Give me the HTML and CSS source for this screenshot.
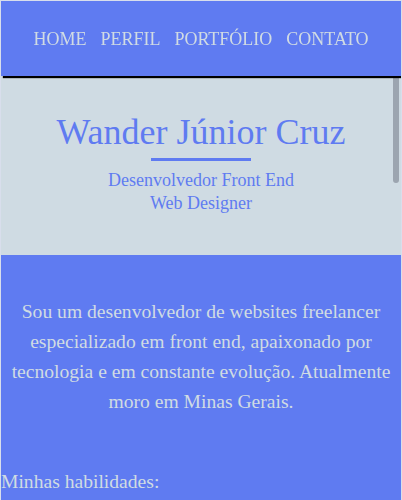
FILE: index.html
```html
<!DOCTYPE html>
<html lang="pt-BR">
<head>
<meta charset="utf-8">
<title>Wander Júnior Cruz</title>
<link rel="stylesheet" href="styles.css">
</head>
<body>
<header class="topbar">
  <nav class="menu">
    <a href="#" class="menu-link">HOME</a>
    <a href="#" class="menu-link">PERFIL</a>
    <a href="#" class="menu-link">PORTFÓLIO</a>
    <a href="#" class="menu-link">CONTATO</a>
  </nav>
</header>
<section class="hero">
  <h1 class="hero-title">Wander Júnior Cruz</h1>
  <div class="hero-bar"></div>
  <p class="hero-sub">Desenvolvedor Front End<br>Web Designer</p>
</section>
<section class="about">
  <p class="about-text">Sou um desenvolvedor de websites freelancer especializado em front end, apaixonado por tecnologia e em constante evolução. Atualmente moro em Minas Gerais.</p>
  <h2 class="skills-title">Minhas habilidades:</h2>
</section>
<div class="scroll-thumb"></div>
</body>
</html>
```
FILE: styles.css
```css
html {
  background: #d8deec;
  scrollbar-width: none;
}
html::-webkit-scrollbar { display: none; }
body {
  margin: 1px;
  font-family: "Liberation Serif", "Times New Roman", serif;
  min-height: 1400px;
  background: #5f7bf1;
}
.topbar {
  height: 75px;
  background: #5f7bf1;
  display: flex;
  align-items: center;
  justify-content: center;
  box-shadow: 2px 2px 1px #000;
  position: relative;
  z-index: 1;
}
.menu {
  display: flex;
  gap: 14px;
  padding-top: 2px;
}
.menu-link {
  color: #d0dbe3;
  text-decoration: none;
  font-size: 18px;
}
.hero {
  background: #cfdbe3;
  height: 179px;
  display: flex;
  flex-direction: column;
  align-items: center;
  padding-top: 1px;
  box-sizing: border-box;
}
.hero-title {
  margin: 34px 0 0;
  font-weight: normal;
  font-size: 36px;
  line-height: 42px;
  color: #5f7bf1;
}
.hero-bar {
  width: 100px;
  height: 3px;
  background: #5f7bf1;
  margin-top: 5px;
}
.hero-sub {
  margin: 8px 0 0;
  font-size: 18px;
  line-height: 23px;
  text-align: center;
  color: #5f7bf1;
}
.about {
  background: #5f7bf1;
  padding-top: 42px;
  color: #d0dbe3;
}
.about-text {
  margin: 0 auto;
  width: 392px;
  text-align: center;
  font-size: 19.6px;
  line-height: 30px;
}
.skills-title {
  margin: 50px 0 0;
  font-weight: normal;
  font-size: 19.6px;
  line-height: 30px;
}
.scroll-thumb {
  position: fixed;
  top: 3px;
  right: 3px;
  width: 6px;
  height: 180px;
  border-radius: 3px;
  background: rgba(40, 40, 60, 0.3);
}
```
